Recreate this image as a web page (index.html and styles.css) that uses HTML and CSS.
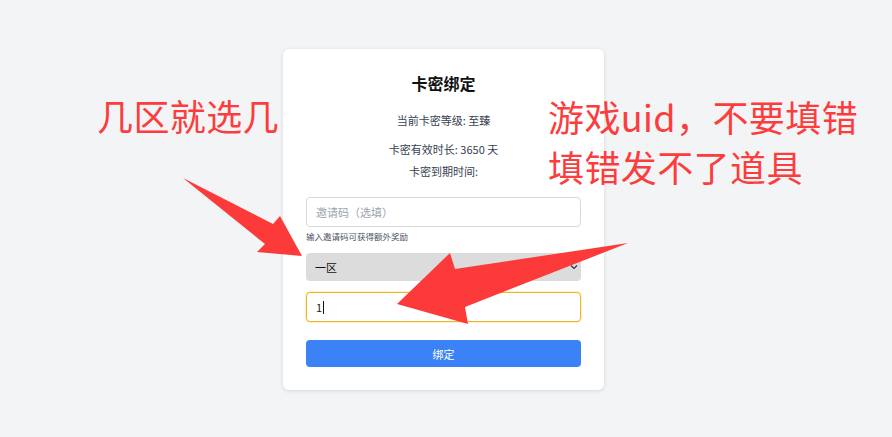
FILE: index.html
```html
<!DOCTYPE html>
<html lang="zh-CN">

<head>
  <meta charset="UTF-8">
  <meta name="viewport" content="width=device-width, initial-scale=1.0">
  <title>卡密绑定</title>
  <link rel="stylesheet" href="styles.css">
</head>

<body>
  <div class="page">
    <div class="card">
      <h1 class="title">卡密绑定</h1>
      <div class="info">
        <p class="level">当前卡密等级: 至臻</p>
        <p>卡密有效时长: 3650 天</p>
        <p>卡密到期时间:</p>
      </div>
      <input class="field" type="text" placeholder="邀请码（选填）">
      <p class="hint">输入邀请码可获得额外奖励</p>
      <div class="select-wrap">
        <select class="select">
          <option>一区</option>
          <option>二区</option>
        </select>
        <svg class="chevron" width="8" height="6" viewBox="0 0 8 6">
          <path d="M1 1.5 L4 4.5 L7 1.5" fill="none" stroke="#333" stroke-width="1.2" />
        </svg>
      </div>
      <div class="uid-wrap">
        <input class="field uid" type="text" value="1">
        <span class="caret"></span>
      </div>
      <button class="btn">绑定</button>
    </div>
  </div>

  <!-- 标注 -->
  <div class="note note-left">几区就选几</div>
  <div class="note note-right">游戏uid，不要填错<br>填错发不了道具</div>
  <svg class="arrows" width="892" height="437" viewBox="0 0 892 437">
    <polygon points="183,178 273,224 280,216 302,256 257,252 265,244" fill="#fc3a3a" />
    <polygon points="628,243 455,269 450,253 397,304 468,324 465,307" fill="#fc3a3a" />
  </svg>
</body>

</html>
```

FILE: styles.css
```css
* {
  margin: 0;
  padding: 0;
  box-sizing: border-box;
}

body {
  background-color: #f3f4f6;
  font-family: "Noto Sans CJK SC", "Noto Sans", sans-serif;
  color: #374151;
  width: 892px;
  height: 437px;
  overflow: hidden;
  position: relative;
}

.page {
  padding: 49px 0 0 283px;
}

.card {
  width: 321px;
  padding: 22px 23px 23px;
  background-color: #fff;
  border-radius: 6px;
  box-shadow: 0 1px 4px rgba(0, 0, 0, 0.12);
  display: flex;
  flex-direction: column;
}

.title {
  font-size: 16px;
  line-height: 24px;
  font-weight: 700;
  color: #111;
  text-align: center;
}

.info {
  margin-top: 14px;
  text-align: center;
  font-size: 11px;
  line-height: 22px;
}

.info .level {
  margin-bottom: 7px;
}

.field {
  display: block;
  width: 100%;
  height: 30px;
  margin-top: 15px;
  padding: 0 9px;
  border: 1px solid #d9d9d9;
  border-radius: 4px;
  font-family: inherit;
  font-size: 11px;
  color: #222;
  outline: none;
}

.field::placeholder {
  color: #9ca3af;
}

.hint {
  margin-top: 3px;
  font-size: 8.5px;
  line-height: 12px;
  color: #4b5563;
}

.select-wrap {
  position: relative;
  margin-top: 11px;
  height: 28px;
}

.select {
  display: block;
  width: 100%;
  height: 28px;
  padding: 0 9px;
  border: none;
  border-radius: 4px;
  background-color: #dcdcdc;
  font-family: inherit;
  font-size: 11px;
  color: #111;
  appearance: none;
  -webkit-appearance: none;
  outline: none;
}

.chevron {
  position: absolute;
  right: 3px;
  top: 11px;
}

.uid-wrap {
  position: relative;
  margin-top: 11px;
  height: 30px;
}

.uid-wrap .field {
  margin-top: 0;
}

.uid {
  border-color: #f0b429;
  box-shadow: 0 0 0 0.5px #fde68a;
}

.caret {
  position: absolute;
  left: 17px;
  top: 9px;
  width: 1px;
  height: 13px;
  background-color: #111;
}

.btn {
  margin-top: 18px;
  height: 27px;
  border: none;
  border-radius: 4px;
  background-color: #3b82f6;
  color: #fff;
  font-family: inherit;
  font-size: 11px;
}

.note {
  position: absolute;
  color: #fc3d3d;
  font-family: "Noto Sans CJK SC", sans-serif;
  font-size: 36px;
  line-height: 50px;
  letter-spacing: 0.4px;
  white-space: nowrap;
}

.note-left {
  left: 97px;
  top: 90px;
}

.note-right {
  left: 548px;
  top: 91px;
}

.arrows {
  position: absolute;
  left: 0;
  top: 0;
  pointer-events: none;
}
```
